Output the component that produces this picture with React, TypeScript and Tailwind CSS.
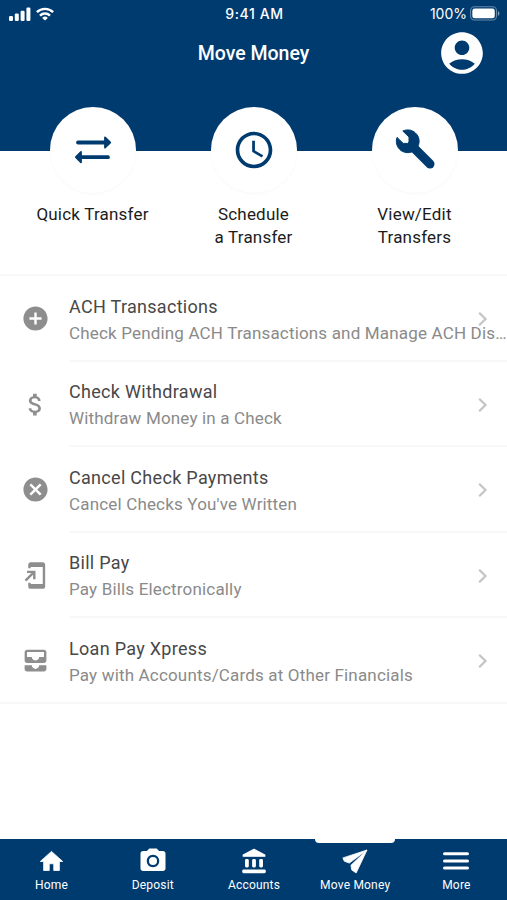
import type { ReactNode } from "react";
import {
	MdAccessTime,
	MdAccountCircle,
	MdAddCircle,
	MdAddToHomeScreen,
	MdAllInbox,
	MdAttachMoney,
	MdCancel,
	MdPhotoCamera,
} from "react-icons/md";

interface QuickAction {
	label: string[];
	icon: ReactNode;
}

interface MenuItem {
	title: string;
	subtitle: string;
	icon: ReactNode;
}

interface Tab {
	label: string;
	icon: ReactNode;
	active?: boolean;
}

const SignalIcon = () => (
	<svg width="22" height="14" viewBox="0 0 22 14" fill="currentColor">
		<rect x="0" y="9" width="4" height="5" rx="1.2" />
		<rect x="5.8" y="6.5" width="4" height="7.5" rx="1.2" />
		<rect x="11.6" y="3.7" width="4" height="10.3" rx="1.2" />
		<rect x="17.4" y="0.5" width="4" height="13.5" rx="1.2" />
	</svg>
);

const WifiIcon = () => (
	<svg width="18" height="14" viewBox="0 0 18 14" fill="none" stroke="currentColor" strokeWidth="2.4">
		<path d="M0.9 5.2a11.6 11.6 0 0 1 16.2 0" />
		<path d="M4 8.6a7.1 7.1 0 0 1 10 0" />
		<path d="M9 13.6 6.2 10.9a4 4 0 0 1 5.6 0z" fill="currentColor" stroke="none" />
	</svg>
);

const BatteryIcon = () => (
	<svg width="30" height="15" viewBox="0 0 31 15">
		<rect x="0.6" y="0.6" width="26.8" height="13.6" rx="4" fill="none" stroke="#fff" strokeOpacity="0.4" strokeWidth="1.1" />
		<rect x="2.4" y="2.4" width="23.2" height="10" rx="2.4" fill="#fff" />
		<path d="M28.8 5v5c1-.4 1.6-1.4 1.6-2.5S29.8 5.4 28.8 5z" fill="#fff" fillOpacity="0.5" />
	</svg>
);

const TransferIcon = () => (
	<svg width="38" height="28" viewBox="0 0 38 28" fill="currentColor" stroke="currentColor" strokeLinejoin="round">
		<path d="M4 6.5H31M7 21.2h27" fill="none" strokeWidth="3.8" strokeLinecap="round" />
		<path d="M31 1.3 36.2 6.5 31 11.7zM7 16 1.8 21.2l5.2 5.2z" strokeWidth="1.8" />
	</svg>
);

const WrenchIcon = () => (
	<svg width="42" height="42" viewBox="0 0 42 42" fill="currentColor" stroke="currentColor" strokeLinejoin="round">
		<path d="M8.8 2A11.4 11.4 0 1 1 3 8.4l6.2 6h4.6l1.2-1.4V8z" strokeWidth="1" />
		<path d="M18 17 36 35" strokeWidth="9" strokeLinecap="round" />
	</svg>
);

const ChevronIcon = () => (
	<svg width="10" height="16" viewBox="0 0 10 16" fill="none" stroke="currentColor" strokeWidth="2.2">
		<path d="M1.2 1.7 7.5 8 1.2 14.3" />
	</svg>
);

const HomeIcon = () => (
	<svg
		width="27"
		height="27"
		viewBox="0 0 24 24"
		fill="currentColor"
		stroke="currentColor"
		strokeWidth="0.7"
		strokeLinejoin="round"
	>
		<path d="M10 20v-6h4v6h5v-8h3L12 3 2 12h3v8z" />
	</svg>
);

const BankIcon = () => (
	<svg width="26" height="26" viewBox="0 0 26 26" fill="currentColor">
		<path
			d="M13 1.4 23.8 7v1.2H2.2V7z"
			stroke="currentColor"
			strokeWidth="1.2"
			strokeLinejoin="round"
		/>
		<rect x="4" y="11" width="3.8" height="8.4" rx="1.4" />
		<rect x="11.1" y="11" width="3.8" height="8.4" rx="1.4" />
		<rect x="18.2" y="11" width="3.8" height="8.4" rx="1.4" />
		<rect x="1.2" y="21.6" width="23.6" height="3.6" rx="1.4" />
	</svg>
);

const SendIcon = () => (
	<svg width="26" height="25" viewBox="0 0 26 25" fill="currentColor" stroke="currentColor" strokeWidth="0.8" strokeLinejoin="round">
		<path d="M25 1 .9 8.9 2.3 12.2l5 1.9z" />
		<path d="M25 1 8.9 16.3 9.8 21.1l4.4 2.8z" />
	</svg>
);

const MenuIcon = () => (
	<svg width="28" height="20" viewBox="0 0 28 20" stroke="currentColor" strokeWidth="3" strokeLinecap="round">
		<path d="M2.5 2.7h23M2.5 9.9h23M2.5 17.1h23" />
	</svg>
);

const quickActions: QuickAction[] = [
	{ label: ["Quick Transfer"], icon: <TransferIcon /> },
	{ label: ["Schedule", "a Transfer"], icon: <MdAccessTime size={44} /> },
	{ label: ["View/Edit", "Transfers"], icon: <WrenchIcon /> },
];

const menuItems: MenuItem[] = [
	{
		title: "ACH Transactions",
		subtitle: "Check Pending ACH Transactions and Manage ACH Dis…",
		icon: <MdAddCircle size={29} />,
	},
	{
		title: "Check Withdrawal",
		subtitle: "Withdraw Money in a Check",
		icon: <MdAttachMoney size={29} />,
	},
	{
		title: "Cancel Check Payments",
		subtitle: "Cancel Checks You've Written",
		icon: <MdCancel size={29} />,
	},
	{
		title: "Bill Pay",
		subtitle: "Pay Bills Electronically",
		icon: <MdAddToHomeScreen size={29} />,
	},
	{
		title: "Loan Pay Xpress",
		subtitle: "Pay with Accounts/Cards at Other Financials",
		icon: <MdAllInbox size={29} />,
	},
];

const tabs: Tab[] = [
	{ label: "Home", icon: <HomeIcon /> },
	{ label: "Deposit", icon: <MdPhotoCamera size={30} /> },
	{ label: "Accounts", icon: <BankIcon /> },
	{ label: "Move Money", icon: <SendIcon />, active: true },
	{ label: "More", icon: <MenuIcon /> },
];

const StatusBar = () => (
	<div className="grid h-[27px] grid-cols-3 items-center pl-[9px] pr-[7px] font-['Inter',sans-serif]">
		<div className="flex items-center gap-[5px]">
			<SignalIcon />
			<WifiIcon />
		</div>
		<div className="whitespace-nowrap text-center text-[14px] font-medium tracking-[0.6px]">9:41 AM</div>
		<div className="flex items-center justify-end gap-[3px] text-[14px]">
			<span>100%</span>
			<BatteryIcon />
		</div>
	</div>
);

const MenuRow = ({ item, last }: { item: MenuItem; last: boolean }) => (
	<li className="flex h-[85.5px]">
		<div className={`flex w-[69px] items-center justify-center pl-px text-[#8e8e8e] ${last ? "border-b-2 border-[#f8f8f8] pt-px" : ""}`}>
			{item.icon}
		</div>
		<div className="relative flex min-w-0 flex-1 flex-col justify-center border-b-2 border-[#f8f8f8] pt-[4px]">
			<p className="text-[18px] leading-[26px] tracking-[0.3px] text-[#484848]">{item.title}</p>
			<p className="whitespace-nowrap text-[17px] leading-[26px] tracking-[0.17px] text-[#8a8a8a]">{item.subtitle}</p>
			<span className="absolute right-[19px] top-[35px] text-[#c4c4c4]">
				<ChevronIcon />
			</span>
		</div>
	</li>
);

export default function App() {
	return (
		<div className="flex h-[900px] w-[507px] flex-col overflow-hidden bg-white font-['Roboto',sans-serif]">
			<header className="h-[151px] shrink-0 bg-[#003b70] text-white">
				<StatusBar />
				<div className="grid h-[51px] grid-cols-[1fr_auto_1fr] items-center pr-[20px]">
					<h1 className="col-start-2 pl-[20px] pt-[2px] text-[19.5px] font-medium">Move Money</h1>
					<MdAccountCircle size={50} className="justify-self-end" />
				</div>
			</header>

			<section className="-mt-[44px] grid h-[169px] shrink-0 grid-cols-3 border-b-2 border-[#f8f8f8] px-[12px]">
				{quickActions.map((action) => (
					<div key={action.label[0]} className="flex flex-col items-center">
						<div className="flex h-[86px] w-[86px] shrink-0 items-center justify-center rounded-full bg-white text-[#003b70] shadow-[0_1px_3px_rgba(0,0,0,0.03)]">
							{action.icon}
						</div>
						<p className="mt-[10px] text-center text-[17px] leading-[23px] tracking-[0.2px] text-[#1c1c1c]">
							{action.label.map((line) => (
								<span key={line} className="block">
									{line}
								</span>
							))}
						</p>
					</div>
				))}
			</section>

			<ul className="flex-1">
				{menuItems.map((item, i) => (
					<MenuRow key={item.title} item={item} last={i === menuItems.length - 1} />
				))}
			</ul>

			<nav className="grid h-[61px] shrink-0 grid-cols-5 bg-[#003b70] pl-px text-white">
				{tabs.map((tab) => (
					<div key={tab.label} className="relative flex flex-col items-center pt-[7px]">
						{tab.active && <span className="absolute -top-px h-[5px] w-[80px] rounded-b bg-white" />}
						<div className="flex h-[30px] items-center">{tab.icon}</div>
						<span className="text-[12px] leading-[18px] tracking-[0.2px]">{tab.label}</span>
					</div>
				))}
			</nav>
		</div>
	);
}
